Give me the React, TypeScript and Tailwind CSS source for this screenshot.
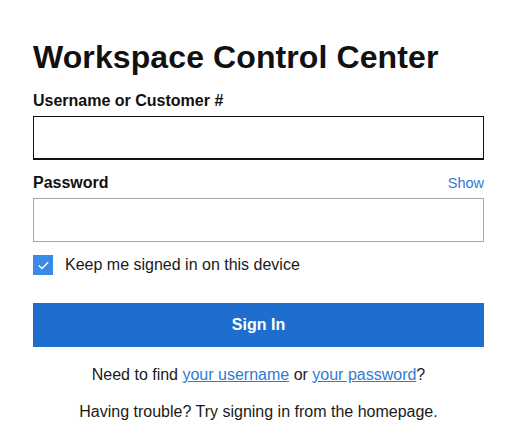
import React from 'react';

export default function App() {
  return (
    <div className="min-h-screen bg-white pl-[33px] pr-[30px] pt-[38px] text-[#1a1a1a] font-['Liberation_Sans',Arial,sans-serif]">
      <h1 className="text-[32px] leading-[38px] font-bold tracking-[0.1px] text-[#111]">Workspace Control Center</h1>

      <form className="mt-[16px] flex flex-col" onSubmit={e => e.preventDefault()}>
        <label className="text-[16px] leading-[18px] font-bold text-[#111]">Username or Customer #</label>
        <input
          type="text"
          className="mt-[6px] h-[44px] w-full border border-[#111] border-b-2 bg-white px-3 text-[15px] outline-none"
        />

        <div className="mt-[14px] flex items-end justify-between">
          <label className="text-[16px] leading-[18px] font-bold text-[#111]">Password</label>
          <button type="button" className="text-[14.5px] leading-[17px] text-[#2f7bd4]">Show</button>
        </div>
        <input
          type="password"
          className="mt-[6px] h-[44px] w-full border border-[#a8a8a8] bg-white px-3 text-[15px] outline-none"
        />

        <label className="mt-[13px] flex items-center gap-3 text-[16px] leading-[20px] text-[#1a1a1a]">
          <span className="flex h-5 w-5 items-center justify-center bg-[#3a8ae8]">
            <svg width="11" height="9" viewBox="0 0 11 9" fill="none">
              <path d="M0.8 4.6 L4 7.6 L10.2 1.2" stroke="white" strokeWidth="1.4" />
            </svg>
          </span>
          Keep me signed in on this device
        </label>

        <button
          type="submit"
          className="mt-[28px] h-[44px] w-full bg-[#1f6dcd] text-[16px] font-bold text-white"
        >
          Sign In
        </button>
      </form>

      <p className="mt-[18px] text-center text-[16px] leading-[20px] text-[#1a1a1a]">
        Need to find <a href="#" className="text-[#2f7bd4] underline">your username</a> or{' '}
        <a href="#" className="text-[#2f7bd4] underline">your password</a>?
      </p>
      <p className="mt-[17px] text-center text-[16px] leading-[20px] text-[#1a1a1a]">
        Having trouble? Try signing in from the homepage.
      </p>
    </div>
  );
}
